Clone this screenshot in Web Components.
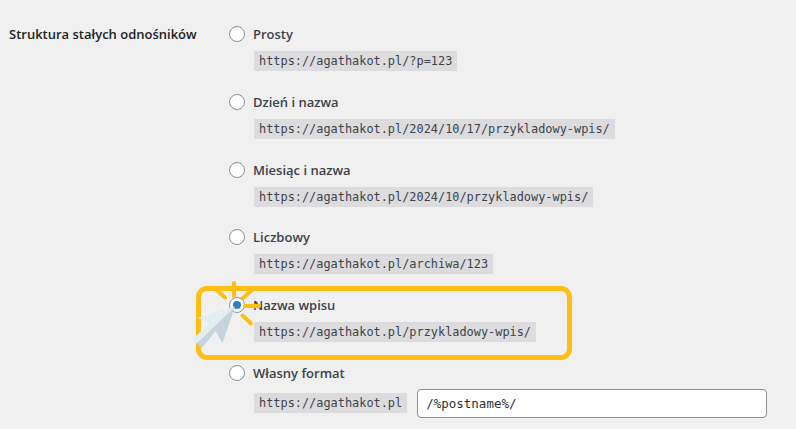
<!DOCTYPE html>
<html lang="pl">
<head>
<meta charset="utf-8">
<title>Struktura stałych odnośników</title>
<style>
  html, body { margin: 0; height: 100%; background: #f0f0f1; overflow: hidden; }
</style>
</head>
<body>
<permalink-settings label="Struktura stałych odnośników">
  <permalink-option label="Prosty" code="https://agathakot.pl/?p=123"></permalink-option>
  <permalink-option label="Dzień i nazwa" code="https://agathakot.pl/2024/10/17/przykladowy-wpis/"></permalink-option>
  <permalink-option label="Miesiąc i nazwa" code="https://agathakot.pl/2024/10/przykladowy-wpis/"></permalink-option>
  <permalink-option label="Liczbowy" code="https://agathakot.pl/archiwa/123"></permalink-option>
  <permalink-option label="Nazwa wpisu" code="https://agathakot.pl/przykladowy-wpis/" checked highlight></permalink-option>
  <permalink-option label="Własny format" code="https://agathakot.pl" value="/%postname%/"></permalink-option>
</permalink-settings>

<script>
class PermalinkSettings extends HTMLElement {
    constructor() {
        super();
        this.shadowDOM = this.attachShadow({mode: 'open'});
    }

    connectedCallback() {
        this.shadowDOM.innerHTML = `
        <style>
        :host {
            display: flex;
            padding: 25px 29px 0 9px;
            font: 600 13px/18px "Open Sans", "Noto Sans", sans-serif;
            color: #3c434a;
        }
        .title { width: 220px; flex: none; color: #1d2327; }
        .options { flex: 1; display: flex; flex-direction: column; }
        </style>
        <div class="title">${this.getAttribute('label')}</div>
        <div class="options"><slot></slot></div>
        `;
    }
}

class PermalinkOption extends HTMLElement {
    constructor() {
        super();
        this.shadowDOM = this.attachShadow({mode: 'open'});
    }

    connectedCallback() {
        const checked = this.hasAttribute('checked');
        const value = this.getAttribute('value');
        this.shadowDOM.innerHTML = `
        <style>
        :host { display: block; position: relative; height: 67.8px; }
        .head { display: flex; align-items: center; gap: 8px; height: 18px; }
        .radio {
            width: 16px; height: 16px; box-sizing: border-box;
            border: 1px solid #8c8f94; border-radius: 50%; background: #fff;
            display: flex; align-items: center; justify-content: center; flex: none;
            position: relative; z-index: 1;
        }
        .radio i { width: 8px; height: 8px; border-radius: 50%; background: #2f7ec6; }
        .body { display: flex; align-items: center; gap: 10px; margin: 8px 0 0 25px; }
        :host([value]) .body { margin-top: 7px; }
        code {
            font: 400 11.9px/20px "DejaVu Sans Mono", "Liberation Mono", monospace;
            background: #dcdcde; color: #3c434a; padding: 0 5px; white-space: nowrap;
        }
        input {
            width: 350px; height: 29px; box-sizing: border-box; margin: 0;
            border: 1px solid #8c8f94; border-radius: 4px; background: #fff;
            padding: 0 8px; color: #2c3338;
            font: 400 12.5px "DejaVu Sans Mono", "Liberation Mono", monospace;
        }
        .frame {
            position: absolute; left: -33px; top: -10px; width: 376px; height: 74px;
            box-sizing: border-box; border: 5px solid #ffbe16; border-radius: 11px;
        }
        svg.pointer { position: absolute; left: -37px; top: -16.2px; z-index: 2; }
        </style>
        ${this.hasAttribute('highlight') ? '<div class="frame"></div>' : ''}
        <div class="head">
            <span class="radio">${checked ? '<i></i>' : ''}</span>
            <span>${this.getAttribute('label')}</span>
        </div>
        <div class="body">
            <code>${this.getAttribute('code')}</code>
            ${value !== null ? `<input type="text" value="${value}">` : ''}
        </div>
        ${this.hasAttribute('highlight') ? `
        <svg class="pointer" width="72" height="72" viewBox="192 280 72 72">
            <g stroke="#ffbe16" stroke-width="4" stroke-linecap="round" fill="none">
                <path d="M234 283V296M216.500 290L225 297.500M252 290L243 298M245 306H259M242.500 315.500L251 323.500"/>
            </g>
            <path d="M235 306.500L198 318L209.500 324L192.500 339L197 343.500Z" fill="#e2edf2"/>
            <path d="M235 306.500L222.500 343L215.500 331L202 348L197 343.500Z" fill="#c5d3dc"/>
        </svg>` : ''}
        `;
    }
}

customElements.define('permalink-settings', PermalinkSettings);
customElements.define('permalink-option', PermalinkOption);
</script>
</body>
</html>
